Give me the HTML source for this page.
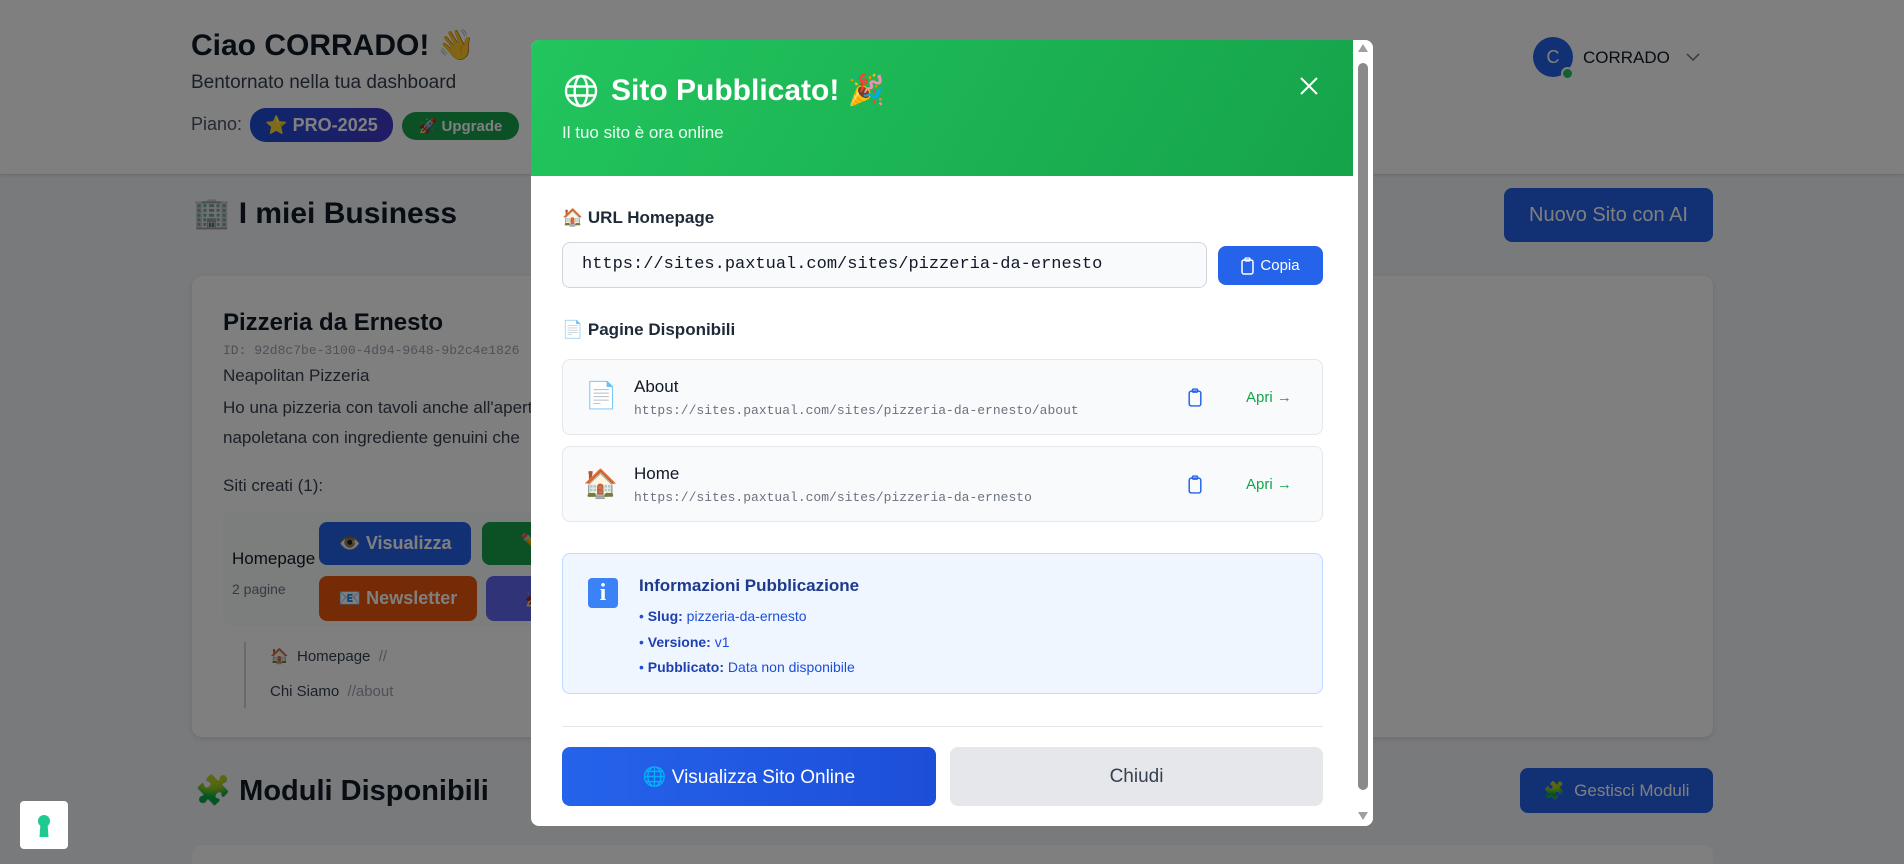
<!DOCTYPE html>
<html><head><meta charset="utf-8">
<style>
*{box-sizing:border-box;margin:0;padding:0}
html{width:1904px;height:864px;overflow:hidden}
body{width:1904px;height:864px;overflow:hidden;position:relative;font-family:"Liberation Sans",Arial,sans-serif;background:#f3f4f6;color:#111827}
.abs{position:absolute}
.mono{font-family:"Liberation Mono","DejaVu Sans Mono",monospace}
.header{left:0;top:0;width:1904px;height:174px;background:#fff;box-shadow:0 1px 3px rgba(0,0,0,.15)}
.pill{position:absolute;color:#fff;font-weight:bold;border-radius:16px;display:flex;align-items:center;justify-content:center}
.btn{position:absolute;color:#fff;font-weight:bold;border-radius:8px;display:flex;align-items:center;justify-content:center;font-size:18px}
.overlay{left:0;top:0;width:1904px;height:864px;background:rgba(0,0,0,.5)}
.modal{left:531px;top:40px;width:842px;height:786px;background:#fff;border-radius:8px;overflow:hidden}
.row{position:absolute;left:31px;width:761px;background:#f9fafb;border:1px solid #e5e7eb;border-radius:8px}
</style></head><body>
<div class="abs header"></div>
<div class="abs" style="left:191px;top:28px;font-size:30px;font-weight:bold">Ciao CORRADO! 👋</div>
<div class="abs" style="left:191px;top:72px;font-size:19px;color:#374151">Bentornato nella tua dashboard</div>
<div class="abs" style="left:191px;top:114px;font-size:18px;color:#4b5563">Piano:</div>
<div class="pill" style="left:250px;top:108px;width:143px;height:34px;background:linear-gradient(90deg,#1d4ed8,#4338ca);font-size:18px">⭐ PRO-2025</div>
<div class="pill" style="left:402px;top:112px;width:117px;height:28px;background:#16a34a;font-size:15px">🚀 Upgrade</div>
<div class="abs" style="left:1533px;top:37px;width:40px;height:40px;border-radius:50%;background:#2563eb;color:#fff;font-size:18px;display:flex;align-items:center;justify-content:center">C</div>
<div class="abs" style="left:1561px;top:67px;width:13px;height:13px;border-radius:50%;background:#22c55e;border:2px solid #fff"></div>
<div class="abs" style="left:1583px;top:48px;font-size:17px;color:#111827">CORRADO</div>
<svg class="abs" style="left:1686px;top:52px" width="14" height="10" viewBox="0 0 14 10"><path d="M1 2l6 6 6-6" fill="none" stroke="#6b7280" stroke-width="1.5"/></svg>

<div class="abs" style="left:193px;top:196px;font-size:30px;font-weight:bold">🏢 I miei Business</div>
<div class="btn" style="left:1504px;top:188px;width:209px;height:54px;background:#2563eb;font-weight:normal;font-size:20px">Nuovo Sito con AI</div>

<div class="abs" style="left:192px;top:276px;width:1521px;height:461px;background:#fff;border-radius:10px;box-shadow:0 2px 6px rgba(0,0,0,.1)"></div>
<div class="abs" style="left:223px;top:309px;font-size:24px;font-weight:bold">Pizzeria da Ernesto</div>
<div class="abs mono" style="left:223px;top:343px;font-size:13px;color:#9ca3af">ID: 92d8c7be-3100-4d94-9648-9b2c4e1826</div>
<div class="abs" style="left:223px;top:366px;font-size:17px;color:#374151">Neapolitan Pizzeria</div>
<div class="abs" style="left:223px;top:393px;font-size:17px;color:#374151;line-height:30px">Ho una pizzeria con tavoli anche all'aperto<br>napoletana con ingrediente genuini che</div>
<div class="abs" style="left:223px;top:476px;font-size:17px;color:#374151">Siti creati (1):</div>
<div class="abs" style="left:223px;top:512px;width:400px;height:114px;background:#f9fafb;border-radius:8px"></div>
<div class="abs" style="left:232px;top:549px;font-size:17px;color:#111827">Homepage</div>
<div class="abs" style="left:232px;top:581px;font-size:14px;color:#6b7280">2 pagine</div>
<div class="btn" style="left:319px;top:522px;width:152px;height:43px;background:#2563eb">👁️ Visualizza</div>
<div class="btn" style="left:482px;top:522px;width:100px;height:43px;background:#16a34a">✏️</div>
<div class="btn" style="left:319px;top:576px;width:158px;height:45px;background:#ea580c">📧 Newsletter</div>
<div class="btn" style="left:486px;top:576px;width:100px;height:45px;background:#6366f1">🚀</div>
<div class="abs" style="left:244px;top:642px;width:2px;height:66px;background:#d1d5db"></div>
<div class="abs" style="left:270px;top:647px;font-size:15px;color:#374151">🏠 &nbsp;Homepage &nbsp;<span style="color:#9ca3af">//</span></div>
<div class="abs" style="left:270px;top:683px;font-size:15px;color:#374151">Chi Siamo &nbsp;<span style="color:#9ca3af">//about</span></div>

<div class="abs" style="left:195px;top:774px;font-size:29px;font-weight:bold">🧩 Moduli Disponibili</div>
<div class="btn" style="left:1520px;top:768px;width:193px;height:45px;background:#2563eb;font-weight:normal;font-size:17px">🧩 &nbsp;Gestisci Moduli</div>
<div class="abs" style="left:192px;top:845px;width:1521px;height:19px;background:#fff;border-radius:10px 10px 0 0"></div>

<div class="abs overlay"></div>

<div class="abs" style="left:20px;top:801px;width:48px;height:48px;background:#fff;border-radius:4px"></div>
<svg class="abs" style="left:20px;top:801px" width="48" height="48" viewBox="0 0 48 48"><circle cx="24" cy="20" r="6" fill="#1ecb8f"/><path d="M20.5 22h7l1 14h-9z" fill="#1ecb8f"/></svg>

<div class="abs modal">
  <div class="abs" style="left:0;top:0;width:822px;height:136px;background:linear-gradient(120deg,#22c55e,#16a34a)"></div>
  <svg class="abs" style="left:32px;top:33px" width="36" height="36" viewBox="0 0 24 24" fill="none" stroke="#fff" stroke-width="1.6"><circle cx="12" cy="12" r="10"/><ellipse cx="12" cy="12" rx="4.2" ry="10"/><path d="M2.5 9h19M2.5 15h19"/></svg>
  <div class="abs" style="left:80px;top:33px;font-size:30px;font-weight:bold;color:#fff">Sito Pubblicato! 🎉</div>
  <div class="abs" style="left:31px;top:83px;font-size:17px;color:#ecfdf5">Il tuo sito è ora online</div>
  <svg class="abs" style="left:768px;top:36px" width="20" height="20" viewBox="0 0 20 20"><path d="M2 2l16 16M18 2L2 18" stroke="#fff" stroke-width="2"/></svg>

  <div class="abs" style="left:31px;top:168px;font-size:17px;font-weight:bold;color:#1f2937">🏠 URL Homepage</div>
  <div class="abs mono" style="left:31px;top:202px;width:645px;height:46px;background:#f8fafc;border:1px solid #d1d5db;border-radius:8px;padding:0 19px;line-height:44px;font-size:17px;color:#111827">https://sites.paxtual.com/sites/pizzeria-da-ernesto</div>
  <div class="btn" style="left:687px;top:206px;width:105px;height:39px;background:#2563eb;font-weight:normal;font-size:15px">
    <svg width="13" height="18" viewBox="0 0 13 18" style="margin-right:6px"><rect x="1" y="3" width="11" height="14" rx="2" fill="none" stroke="#fff" stroke-width="1.5"/><rect x="4" y="1" width="5" height="3" rx="1" fill="none" stroke="#fff" stroke-width="1.3"/></svg>Copia</div>

  <div class="abs" style="left:31px;top:280px;font-size:17px;font-weight:bold;color:#1f2937">📄 Pagine Disponibili</div>

  <div class="row" style="top:319px;height:76px">
    <div class="abs" style="left:22px;top:20px;font-size:26px">📄</div>
    <div class="abs" style="left:71px;top:17px;font-size:17px;color:#111827">About</div>
    <div class="abs mono" style="left:71px;top:43px;font-size:13px;color:#6b7280">https://sites.paxtual.com/sites/pizzeria-da-ernesto/about</div>
    <svg class="abs" style="left:625px;top:28px" width="14" height="19" viewBox="0 0 13 18"><rect x="1" y="3" width="11" height="14" rx="2" fill="none" stroke="#2563eb" stroke-width="1.4"/><rect x="4" y="1" width="5" height="3" rx="1" fill="none" stroke="#2563eb" stroke-width="1.2"/></svg>
    <div class="abs" style="left:683px;top:29px;font-size:15px;color:#16a34a">Apri →</div>
  </div>
  <div class="row" style="top:406px;height:76px">
    <div class="abs" style="left:20px;top:20px;font-size:28px">🏠</div>
    <div class="abs" style="left:71px;top:17px;font-size:17px;color:#111827">Home</div>
    <div class="abs mono" style="left:71px;top:43px;font-size:13px;color:#6b7280">https://sites.paxtual.com/sites/pizzeria-da-ernesto</div>
    <svg class="abs" style="left:625px;top:28px" width="14" height="19" viewBox="0 0 13 18"><rect x="1" y="3" width="11" height="14" rx="2" fill="none" stroke="#2563eb" stroke-width="1.4"/><rect x="4" y="1" width="5" height="3" rx="1" fill="none" stroke="#2563eb" stroke-width="1.2"/></svg>
    <div class="abs" style="left:683px;top:29px;font-size:15px;color:#16a34a">Apri →</div>
  </div>

  <div class="abs" style="left:31px;top:513px;width:761px;height:141px;background:#eff6ff;border:1px solid #bfdbfe;border-radius:8px">
    <div class="abs" style="left:25px;top:24px;width:30px;height:30px;background:#3b82f6;border-radius:4px;color:#fff;font-weight:bold;font-size:24px;text-align:center;line-height:30px;font-family:'Liberation Serif',serif">i</div>
    <div class="abs" style="left:76px;top:22px;font-size:17px;font-weight:bold;color:#1e3a8a">Informazioni Pubblicazione</div>
    <div class="abs" style="left:76px;top:50px;font-size:14px;color:#1d4ed8;line-height:25.5px">• <b style="color:#1e40af">Slug:</b> pizzeria-da-ernesto<br>• <b style="color:#1e40af">Versione:</b> v1<br>• <b style="color:#1e40af">Pubblicato:</b> Data non disponibile</div>
  </div>

  <div class="abs" style="left:31px;top:686px;width:761px;height:1px;background:#e5e7eb"></div>
  <div class="btn" style="left:31px;top:707px;width:374px;height:59px;background:linear-gradient(90deg,#2563eb,#1d4ed8);font-weight:normal;font-size:19px">🌐 Visualizza Sito Online</div>
  <div class="btn" style="left:419px;top:707px;width:373px;height:59px;background:#e5e7eb;color:#374151;font-weight:normal;font-size:19px">Chiudi</div>

  <div class="abs" style="left:822px;top:0;width:20px;height:786px;background:#fff"></div>
  <div class="abs" style="left:827px;top:23px;width:10px;height:727px;background:#8a8a8a;border-radius:5px"></div>
  <svg class="abs" style="left:827px;top:4px" width="10" height="8"><path d="M5 0L10 8H0z" fill="#a0a0a0"/></svg>
  <svg class="abs" style="left:827px;top:772px" width="10" height="8"><path d="M0 0H10L5 8z" fill="#a0a0a0"/></svg>
</div>
</body></html>
